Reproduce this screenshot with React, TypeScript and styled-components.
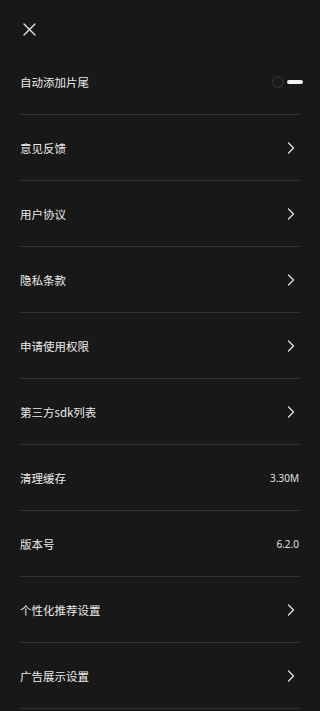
import styled, { createGlobalStyle } from 'styled-components'

const GlobalStyle = createGlobalStyle`
  html, body {
    margin: 0;
    padding: 0;
    background: #181818;
  }
  body {
    font-family: "Noto Sans CJK SC", "Noto Sans", sans-serif;
  }
`

const Page = styled.div`
  width: 320px;
  min-height: 711px;
  background: #181818;
  color: #e2e2e2;
  overflow: hidden;
`

const Header = styled.div`
  height: 49px;
  display: flex;
  align-items: flex-start;
  padding: 23px 0 0 23px;
  box-sizing: border-box;
`

const CloseButton = styled.button`
  width: 13px;
  height: 13px;
  padding: 0;
  border: 0;
  background: none;
  display: flex;
  color: #e6e6e6;
`

const List = styled.div`
  display: flex;
  flex-direction: column;
  padding: 0 20px;
`

const Row = styled.div`
  height: 66px;
  box-sizing: border-box;
  border-bottom: 1px solid #313131;
  display: flex;
  align-items: center;
  justify-content: space-between;
  padding: 1px 0 0 0;
`

const Label = styled.span`
  font-size: 11.5px;
  color: #ececec;
  letter-spacing: 0;
`

const Value = styled.span`
  font-family: "Noto Sans", "Liberation Sans", sans-serif;
  font-size: 10px;
  color: #e0e0e0;
  margin-right: 1px;
`

const Chevron = styled.svg`
  width: 8px;
  height: 12px;
  margin-right: 5px;
`

const Toggle = styled.div`
  display: flex;
  align-items: center;
  gap: 3px;
  margin-right: -3px;
`

const Knob = styled.div`
  width: 12px;
  height: 12px;
  border-radius: 50%;
  background: #1c1c1c;
  border: 1px solid #353535;
  box-sizing: border-box;
`

const Track = styled.div`
  width: 16px;
  height: 4px;
  border-radius: 2px;
  background: #f2f2f2;
`

type Item = { label: string, kind: 'toggle' | 'link' | 'value', value?: string }

const items: Item[] = [
  { label: '自动添加片尾', kind: 'toggle' },
  { label: '意见反馈', kind: 'link' },
  { label: '用户协议', kind: 'link' },
  { label: '隐私条款', kind: 'link' },
  { label: '申请使用权限', kind: 'link' },
  { label: '第三方sdk列表', kind: 'link' },
  { label: '清理缓存', kind: 'value', value: '3.30M' },
  { label: '版本号', kind: 'value', value: '6.2.0' },
  { label: '个性化推荐设置', kind: 'link' },
  { label: '广告展示设置', kind: 'link' },
]

export default function App() {
  return (
    <>
      <GlobalStyle />
      <Page>
        <Header>
          <CloseButton>
            <svg width="13" height="13" viewBox="0 0 13 13">
              <path d="M1 1 L12 12 M12 1 L1 12" stroke="currentColor" strokeWidth="1.4" strokeLinecap="round" />
            </svg>
          </CloseButton>
        </Header>
        <List>
          {items.map(({ label, kind, value }) => (
            <Row key={label}>
              <Label>{label}</Label>
              {kind === 'toggle' && (
                <Toggle>
                  <Knob />
                  <Track />
                </Toggle>
              )}
              {kind === 'link' && (
                <Chevron viewBox="0 0 8 12">
                  <path d="M1.5 1 L6.5 6 L1.5 11" fill="none" stroke="#e0e0e0" strokeWidth="1.3" strokeLinecap="round" strokeLinejoin="round" />
                </Chevron>
              )}
              {kind === 'value' && <Value>{value}</Value>}
            </Row>
          ))}
        </List>
      </Page>
    </>
  )
}
